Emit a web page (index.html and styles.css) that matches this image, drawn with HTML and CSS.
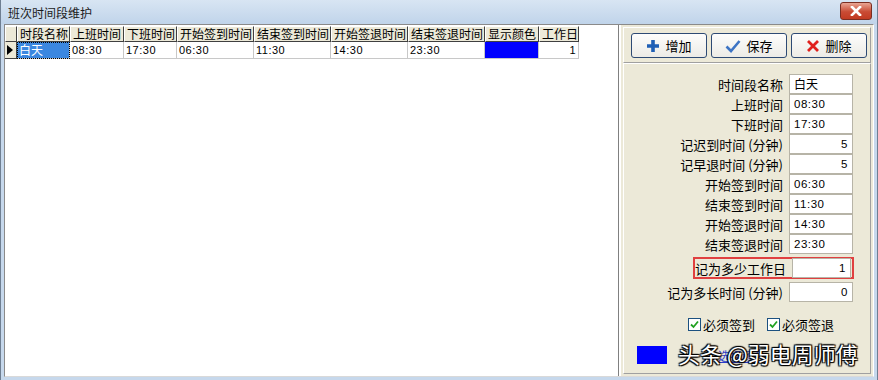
FILE: index.html
```html
<!DOCTYPE html>
<html lang="zh-CN">
<head>
    <meta charset="UTF-8">
    <title>班次时间段维护</title>
    <link rel="stylesheet" href="styles.css">
</head>
<body>
    <div class="window">
        <div class="titlebar">
            <span class="title">班次时间段维护</span>
            <span class="close">
                <svg width="14" height="10" viewBox="0 0 14 10"><path d="M3 1 L11 9 M11 1 L3 9" stroke="#fff" stroke-width="2.6" stroke-linecap="square"/></svg>
            </span>
        </div>
        <div class="content">
            <div class="grid">
                <div class="row head">
                    <div class="cell ind"></div>
                    <div class="cell c1">时段名称</div>
                    <div class="cell c2">上班时间</div>
                    <div class="cell c3">下班时间</div>
                    <div class="cell c4">开始签到时间</div>
                    <div class="cell c5">结束签到时间</div>
                    <div class="cell c6">开始签退时间</div>
                    <div class="cell c7">结束签退时间</div>
                    <div class="cell c8">显示颜色</div>
                    <div class="cell c9">工作日</div>
                </div>
                <div class="row data">
                    <div class="cell ind"><span class="arrow"></span></div>
                    <div class="cell c1 sel">白天</div>
                    <div class="cell c2 num">08:30</div>
                    <div class="cell c3 num">17:30</div>
                    <div class="cell c4 num">06:30</div>
                    <div class="cell c5 num">11:30</div>
                    <div class="cell c6 num">14:30</div>
                    <div class="cell c7 num">23:30</div>
                    <div class="cell c8"><span class="swatch"></span></div>
                    <div class="cell c9 num right">1</div>
                </div>
            </div>

            <div class="side">
                <div class="toolbar">
                    <button class="btn">
                        <svg width="14" height="14" viewBox="0 0 14 14"><path d="M7 1 V13 M1 7 H13" stroke="#1f5fb5" stroke-width="3.6"/></svg>
                        增加
                    </button>
                    <button class="btn">
                        <svg width="16" height="14" viewBox="0 0 16 14"><path d="M1.5 7.5 L6 12 L14.5 2" fill="none" stroke="#3d74c4" stroke-width="2.6"/></svg>
                        保存
                    </button>
                    <button class="btn">
                        <svg width="14" height="14" viewBox="0 0 14 14"><path d="M2 2 L12 12 M12 2 L2 12" stroke="#e0201c" stroke-width="2.8"/></svg>
                        删除
                    </button>
                </div>

                <div class="form">
                    <div class="field"><label>时间段名称</label><span class="input">白天</span></div>
                    <div class="field"><label>上班时间</label><span class="input num">08:30</span></div>
                    <div class="field"><label>下班时间</label><span class="input num">17:30</span></div>
                    <div class="field"><label>记迟到时间 (分钟)</label><span class="input num right">5</span></div>
                    <div class="field"><label>记早退时间 (分钟)</label><span class="input num right">5</span></div>
                    <div class="field"><label>开始签到时间</label><span class="input num">06:30</span></div>
                    <div class="field"><label>结束签到时间</label><span class="input num">11:30</span></div>
                    <div class="field"><label>开始签退时间</label><span class="input num">14:30</span></div>
                    <div class="field"><label>结束签退时间</label><span class="input num">23:30</span></div>
                    <div class="field mark"><label>记为多少工作日</label><span class="input num right">1</span></div>
                    <div class="field"><label>记为多长时间 (分钟)</label><span class="input num right">0</span></div>

                    <div class="checks">
                        <span class="check"><span class="box">
                            <svg width="9" height="9" viewBox="0 0 9 9"><path d="M1 4.5 L3.5 7 L8 1.5" fill="none" stroke="#21a121" stroke-width="1.8"/></svg>
                        </span>必须签到</span>
                        <span class="check"><span class="box">
                            <svg width="9" height="9" viewBox="0 0 9 9"><path d="M1 4.5 L3.5 7 L8 1.5" fill="none" stroke="#21a121" stroke-width="1.8"/></svg>
                        </span>必须签退</span>
                    </div>

                    <div class="colorrow">
                        <span class="colorbox"></span>
                        <span class="pick">
                            <span class="link">选择颜色</span>
                            <span class="mark-text">头条 @弱电周师傅</span>
                        </span>
                    </div>
                </div>
            </div>
        </div>
    </div>
</body>
</html>
```

FILE: styles.css
```css
body {
    margin: 0;
    background: #fff;
    font-family: "Noto Sans CJK SC", "Liberation Sans", sans-serif;
    font-size: 12px;
    color: #000;
}

.window {
    width: 878px;
    height: 380px;
    display: flex;
    flex-direction: column;
    background: #c6d8ec;
    box-sizing: border-box;
    border-left: 1px solid #6f7f92;
    border-right: 1px solid #6f7f92;
}

.titlebar {
    height: 24px;
    display: flex;
    align-items: center;
    justify-content: space-between;
    padding: 0 5px 0 7px;
    background: linear-gradient(#d8e5f3, #c0d4ea);
}

.title {
    font-size: 12px;
    color: #1b1b1b;
}

.close {
    width: 30px;
    height: 16px;
    margin-top: -2px;
    display: flex;
    align-items: center;
    justify-content: center;
    border: 1px solid #7a2e22;
    border-radius: 3px;
    background: linear-gradient(#e9a593, #c94b34 55%, #c23b22);
}

.content {
    flex: 1;
    display: flex;
    margin: 0 3px 3px 3px;
    border: 1px solid #8a8a8a;
    border-right-color: #fff;
    border-bottom-color: #d9d9d9;
}

/* grid */
.grid {
    width: 618px;
    background: #fff;
    border-right: 1px solid #808080;
    padding-top: 1px;
}

.row {
    display: flex;
}

.cell {
    box-sizing: border-box;
    height: 17px;
    line-height: 16px;
    padding: 0 2px;
    white-space: nowrap;
    overflow: hidden;
}

.head .cell {
    background: #ece9d8;
    border-right: 1px solid #404040;
    border-bottom: 1px solid #404040;
    border-top: 1px solid #fff;
    border-left: 1px solid #fff;
    height: 16px;
    line-height: 14px;
    font-size: 12px;
}

.data .cell {
    border-right: 1px solid #c8c8c8;
    border-bottom: 1px solid #c8c8c8;
}

.ind { width: 12px; }
.c1 { width: 53px; }
.c2 { width: 54px; }
.c3 { width: 53px; }
.c4 { width: 77px; }
.c5 { width: 77px; }
.c6 { width: 77px; }
.c7 { width: 77px; }
.c8 { width: 54px; }
.c9 { width: 40px; }

.data .ind {
    background: #ece9d8;
    border-right: 1px solid #404040;
    border-bottom: 1px solid #404040;
    display: flex;
    align-items: center;
}

.arrow {
    width: 0;
    height: 0;
    border-top: 5px solid transparent;
    border-bottom: 5px solid transparent;
    border-left: 6px solid #000;
}

.sel {
    background: #3b87e0;
    color: #fff;
    outline: 1px dotted #000;
    outline-offset: -1px;
}

.num {
    font-family: "Liberation Sans", sans-serif;
    font-size: 11px;
    letter-spacing: 0.5px;
}

.right {
    text-align: right;
}

.data .c8 {
    padding: 0;
}

.swatch {
    display: block;
    height: 16px;
    background: #0000ff;
}

/* side panel */
.side {
    flex: 1;
    display: flex;
    flex-direction: column;
    background: #ece9d8;
    border-left: 2px solid #fff;
    padding: 2px;
}

.toolbar {
    display: flex;
    gap: 4px;
    padding: 5px 3px 4px 7px;
    border: 1px solid #fff;
    border-right-color: #a0a0a0;
    border-bottom-color: #a0a0a0;
}

.btn {
    width: 76px;
    height: 25px;
    display: flex;
    align-items: center;
    justify-content: center;
    gap: 5px;
    font-family: "Noto Sans CJK SC", sans-serif;
    font-size: 13px;
    color: #000;
    background: linear-gradient(#fdfdfc, #ecebe6);
    border: 1px solid #2d4a74;
    border-radius: 3px;
    padding: 0;
}

.form {
    flex: 1;
    display: flex;
    flex-direction: column;
    padding: 10px 0 0 0;
    border: 1px solid #fff;
    border-right-color: #a0a0a0;
    border-bottom-color: #a0a0a0;
}

.field {
    display: flex;
    align-items: center;
    justify-content: flex-end;
    gap: 6px;
    height: 20px;
    padding-right: 17px;
}

.field label {
    font-size: 13px;
    color: #000;
    white-space: nowrap;
}

.input {
    box-sizing: border-box;
    width: 64px;
    height: 20px;
    line-height: 18px;
    padding: 0 4px;
    background: #fff;
    border: 1px solid #b7b4a7;
    font-size: 12px;
}

.input.num {
    font-size: 11.5px;
}

.field.mark {
    align-self: flex-end;
    width: 156px;
    margin: 3px 16px 3px 0;
    padding: 0 1px 0 0;
    height: 18px;
    border: 2px solid #e04040;
    box-sizing: content-box;
}

.checks {
    display: flex;
    justify-content: flex-end;
    gap: 12px;
    padding: 13px 36px 0 0;
}

.check {
    display: flex;
    align-items: center;
    gap: 2px;
    font-size: 13px;
}

.box {
    width: 11px;
    height: 11px;
    background: #fff;
    border: 1px solid #1c5180;
    display: flex;
    align-items: center;
    justify-content: center;
}

.colorrow {
    display: flex;
    align-items: center;
    gap: 11px;
    padding: 12px 0 0 13px;
}

.colorbox {
    width: 30px;
    height: 18px;
    background: #0000ff;
}

.pick {
    position: relative;
}

.link {
    color: #2a3cc8;
    text-decoration: underline;
    font-size: 12px;
    margin-left: 40px;
}

.mark-text {
    position: absolute;
    left: 0;
    top: -10px;
    font-size: 22px;
    white-space: nowrap;
    color: #fff;
    text-shadow: 0 0 1px #000, 1px 1px 1px #000, -1px -1px 1px #000, 1px -1px 1px #000, -1px 1px 1px #000;
}
```
